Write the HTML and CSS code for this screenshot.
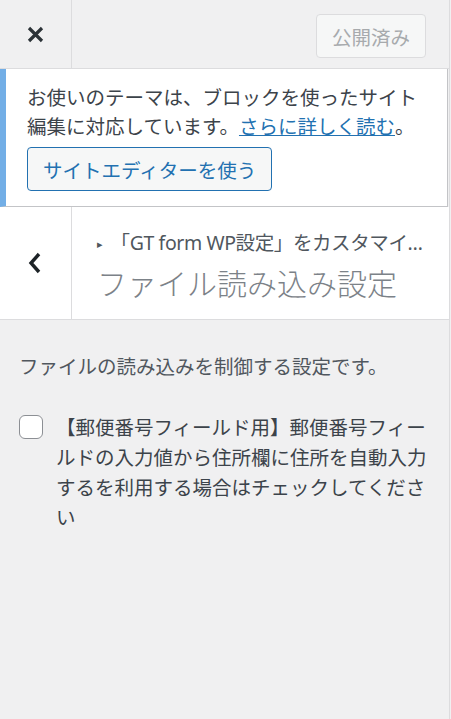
FILE: index.html
```html
<!DOCTYPE html>
<html lang="ja">
<head>
    <meta charset="UTF-8">
    <title>カスタマイズ</title>
    <link rel="stylesheet" href="styles.css">
</head>
<body>
    <div class="sidebar">
        <header class="topbar">
            <button class="close" type="button" aria-label="閉じる">
                <svg width="17" height="17" viewBox="0 0 17 17"><path d="M2 2 L15 15 M15 2 L2 15" stroke="#2c3338" stroke-width="3.2" fill="none"/></svg>
            </button>
            <div class="topbar-actions">
                <button class="publish" type="button" disabled>公開済み</button>
            </div>
        </header>

        <div class="notice">
            <p>お使いのテーマは、ブロックを使ったサイト編集に対応しています。<a href="#">さらに詳しく読む</a>。</p>
            <button class="site-editor" type="button">サイトエディターを使う</button>
        </div>

        <div class="section-head">
            <button class="back" type="button" aria-label="戻る">
                <svg width="16" height="24" viewBox="0 0 16 24"><path d="M12 3 L4 12 L12 21" stroke="#1d2327" stroke-width="3.4" fill="none"/></svg>
            </button>
            <div class="section-titles">
                <span class="crumb"><span class="arrow">▸</span>「GT form WP設定」をカスタマイ…</span>
                <h3>ファイル読み込み設定</h3>
            </div>
        </div>

        <div class="controls">
            <p class="desc">ファイルの読み込みを制御する設定です。</p>
            <label class="check">
                <input type="checkbox">
                <span>【郵便番号フィールド用】郵便番号フィールドの入力値から住所欄に住所を自動入力するを利用する場合はチェックしてください</span>
            </label>
        </div>
    </div>
</body>
</html>
```

FILE: styles.css
```css
* {
    box-sizing: border-box;
}

body {
    margin: 0;
    background: #f0f0f1;
    font-family: "Noto Sans", "Noto Sans CJK JP", sans-serif;
    font-size: 19.5px;
    line-height: 29px;
    color: #3c434a;
}

.sidebar {
    width: 450px;
    min-height: 719px;
    border-right: 1px solid #dcdcde;
    background: #f0f0f1;
}

.topbar {
    display: flex;
    height: 69px;
    border-bottom: 1px solid #dcdcde;
}

.close {
    width: 72px;
    height: 68px;
    padding: 0;
    border: none;
    border-right: 1px solid #dcdcde;
    background: transparent;
    display: flex;
    align-items: center;
    justify-content: center;
}

.topbar-actions {
    flex: 1;
    display: flex;
    justify-content: flex-end;
    align-items: flex-start;
    padding: 14px 23px 0 0;
}

.publish {
    width: 110px;
    height: 44px;
    font-family: inherit;
    font-size: 19.5px;
    color: #a7aaad;
    background: #f6f7f7;
    border: 1px solid #dcdcde;
    border-radius: 4px;
    padding: 0;
}

.notice {
    background: #ffffff;
    border-left: 6px solid #72aee6;
    border-right: 1px solid #c3c4c7;
    border-bottom: 1px solid #c3c4c7;
    margin-right: 1px;
    padding: 14px 18px 15px 21px;
}

.notice p {
    margin: 0;
}

.notice a {
    color: #2271b1;
    text-decoration: underline;
}

.site-editor {
    margin-top: 6px;
    height: 44px;
    padding: 0 15px;
    font-family: inherit;
    font-size: 19.5px;
    color: #2271b1;
    background: #f6f7f7;
    border: 1px solid #2271b1;
    border-radius: 4px;
}

.section-head {
    display: flex;
    background: #ffffff;
    border-bottom: 1px solid #dcdcde;
    height: 113px;
}

.back {
    width: 72px;
    border: none;
    border-right: 1px solid #dcdcde;
    background: transparent;
    display: flex;
    align-items: center;
    justify-content: flex-start;
    padding: 0 0 0 27px;
}

.section-titles {
    padding: 21px 0 0 25px;
    display: flex;
    flex-direction: column;
}

.crumb {
    color: #50575e;
    white-space: nowrap;
    letter-spacing: -0.4px;
}

.crumb .arrow {
    font-size: 11px;
    margin-right: 8px;
    position: relative;
    top: -2px;
}

.section-titles h3 {
    margin: 4px 0 0;
    font-size: 30px;
    line-height: 39px;
    font-weight: 300;
    color: #7c8288;
}

.controls {
    padding: 32px 20px 0 19px;
}

.desc {
    margin: 0 0 32px;
    color: #50575e;
}

.check {
    display: flex;
    align-items: flex-start;
    gap: 13px;
}

.check input {
    appearance: none;
    flex: none;
    width: 24px;
    height: 24px;
    margin: 2px 0 0;
    border: 1px solid #8c8f94;
    border-radius: 6px;
    background: #ffffff;
}

.check span {
    color: #3c434a;
    line-height: 30px;
}
```
